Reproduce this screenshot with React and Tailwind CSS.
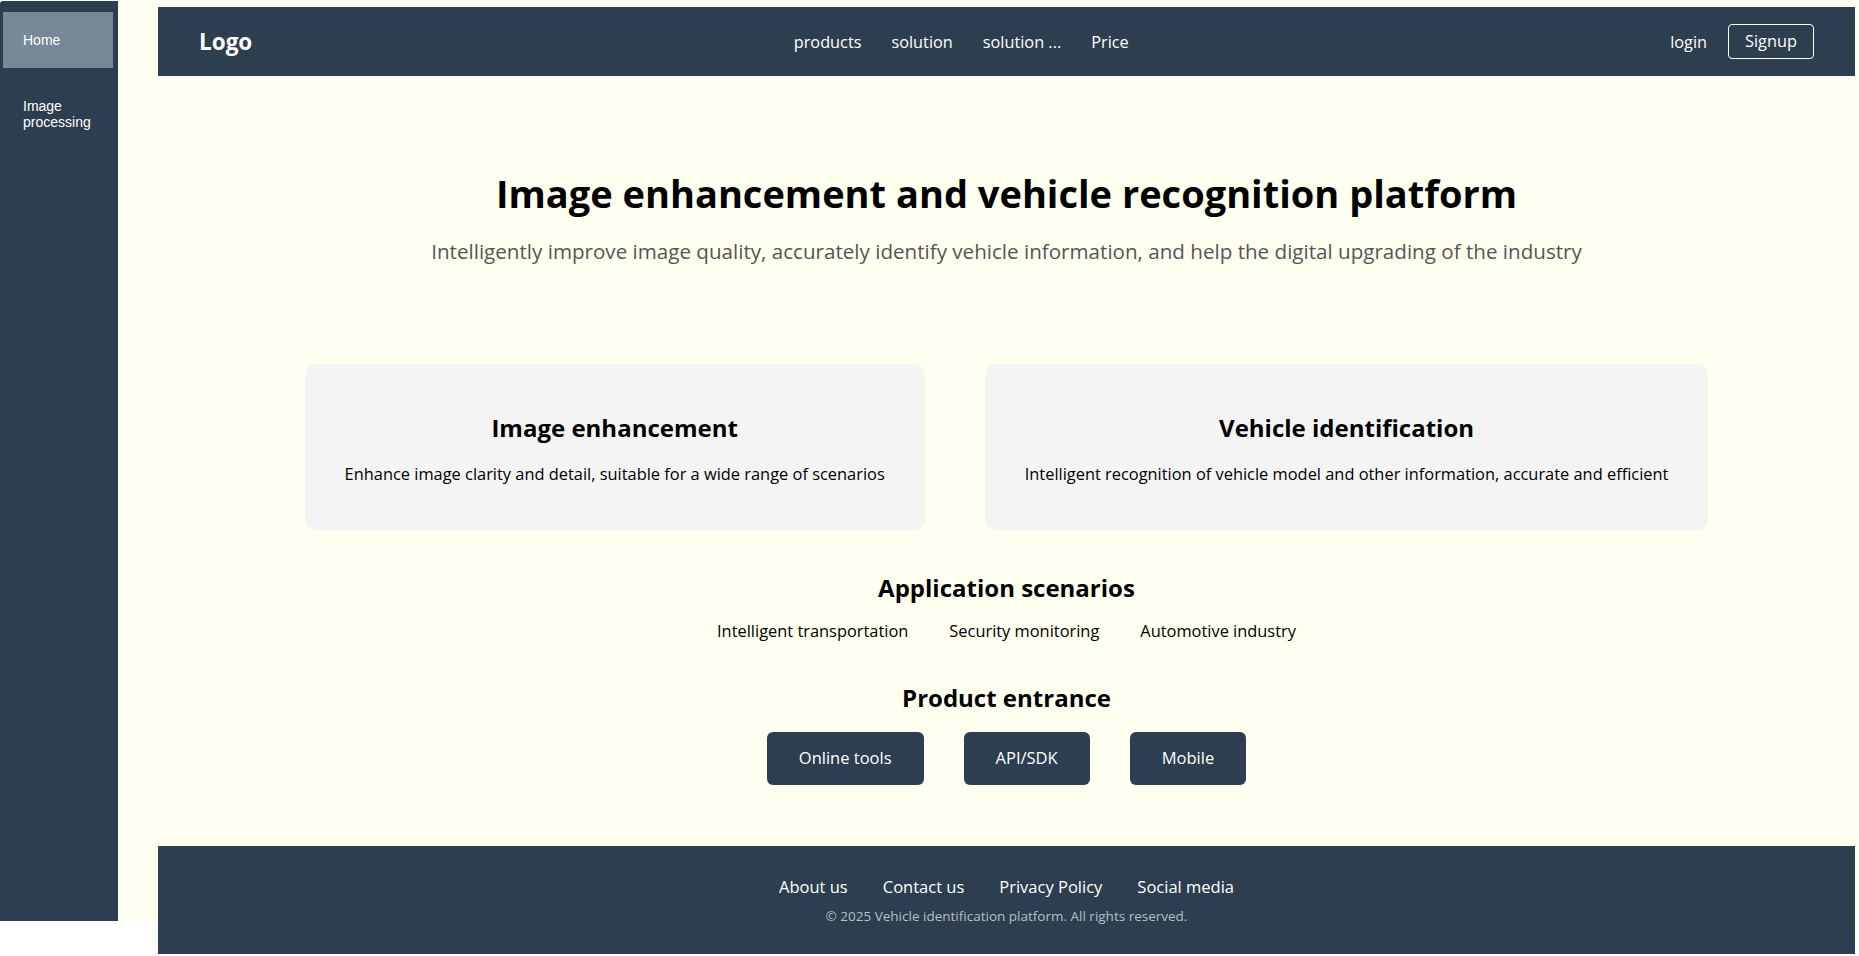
const navLinks = ['products', 'solution', 'solution ...', 'Price'];
const features = [
  {
    title: 'Image enhancement',
    text: 'Enhance image clarity and detail, suitable for a wide range of scenarios',
  },
  {
    title: 'Vehicle identification',
    text: 'Intelligent recognition of vehicle model and other information, accurate and efficient',
  },
];
const scenarios = ['Intelligent transportation', 'Security monitoring', 'Automotive industry'];
const entrances = ['Online tools', 'API/SDK', 'Mobile'];
const footerLinks = ['About us', 'Contact us', 'Privacy Policy', 'Social media'];

function Sidebar() {
  return (
    <aside className="mt-px h-[920px] w-[118px] shrink-0 rounded-tl-[3px] bg-[#2c3e50] pl-[3px] pr-[5px] pt-[11px] font-['Liberation_Sans',Arial,sans-serif] text-[14px] leading-[16px] text-white">
      <div className="bg-[#778899] px-5 py-5">Home</div>
      <div className="mt-[10px] px-5 py-5">
        Image
        <br />
        processing
      </div>
    </aside>
  );
}

function Header() {
  return (
    <header className="flex h-[69px] items-center justify-between bg-[#2c3e50] px-[41px] text-white">
      <div className="text-[22.5px] font-bold">Logo</div>
      <nav className="mt-[2px] flex gap-[30px] text-[16.3px]">
        {navLinks.map((link) => (
          <a key={link} href="#" className="text-white">
            {link}
          </a>
        ))}
      </nav>
      <div className="flex items-center gap-[21px] text-[16.3px]">
        <a href="#" className="mt-[2px]">login</a>
        <button className="h-[35px] w-[86px] rounded-[4px] border border-white">Signup</button>
      </div>
    </header>
  );
}

export default function App() {
  return (
    <div className="flex min-h-screen items-start bg-white font-['Open_Sans',sans-serif] text-black">
      <Sidebar />
      <main className="mt-px h-[919px] flex-1 bg-[#fffff0] pl-[40px] pr-[4px] pt-[6px]">
        <Header />

        <section className="mt-[93px] text-center">
          <h1 className="text-[38px] font-bold leading-[48px]">
            Image enhancement and vehicle recognition platform
          </h1>
          <p className="mt-[20px] text-[20.6px] leading-[28px] text-[#555]">
            Intelligently improve image quality, accurately identify vehicle information, and help the digital upgrading of the industry
          </p>
        </section>

        <section className="mt-[99px] flex justify-center gap-[60px]">
          {features.map((feature) => (
            <div
              key={feature.title}
              className="h-[166px] rounded-[10px] bg-[#f4f4f5] px-[40px] pt-[48px] text-center"
            >
              <h3 className="text-[24px] font-bold leading-[32px]">{feature.title}</h3>
              <p className="mt-[18px] text-[16.4px] leading-[24px]">{feature.text}</p>
            </div>
          ))}
        </section>

        <section className="mt-[42px] text-center">
          <h2 className="text-[24px] font-bold leading-[32px]">Application scenarios</h2>
          <div className="mt-[15px] flex justify-center gap-[41px] text-[16.4px] leading-[24px]">
            {scenarios.map((item) => (
              <span key={item}>{item}</span>
            ))}
          </div>
        </section>

        <section className="mt-[39px] text-center">
          <h2 className="text-[24px] font-bold leading-[32px]">Product entrance</h2>
          <div className="mt-[18px] flex justify-center gap-[40px]">
            {entrances.map((item) => (
              <button
                key={item}
                className="h-[53px] rounded-[6px] bg-[#2c3e50] px-[32px] text-[16.5px] text-white"
              >
                {item}
              </button>
            ))}
          </div>
        </section>

        <footer className="mt-[61px] h-[108px] bg-[#2c3e50] pt-[29px] text-center text-white">
          <div className="flex justify-center gap-[35px] text-[16.5px] leading-[24px]">
            {footerLinks.map((link) => (
              <a key={link} href="#">
                {link}
              </a>
            ))}
          </div>
          <p className="mt-[8px] text-[13.5px] leading-[18px] text-[#b8bec5]">
            © 2025 Vehicle identification platform. All rights reserved.
          </p>
        </footer>
      </main>
    </div>
  );
}
